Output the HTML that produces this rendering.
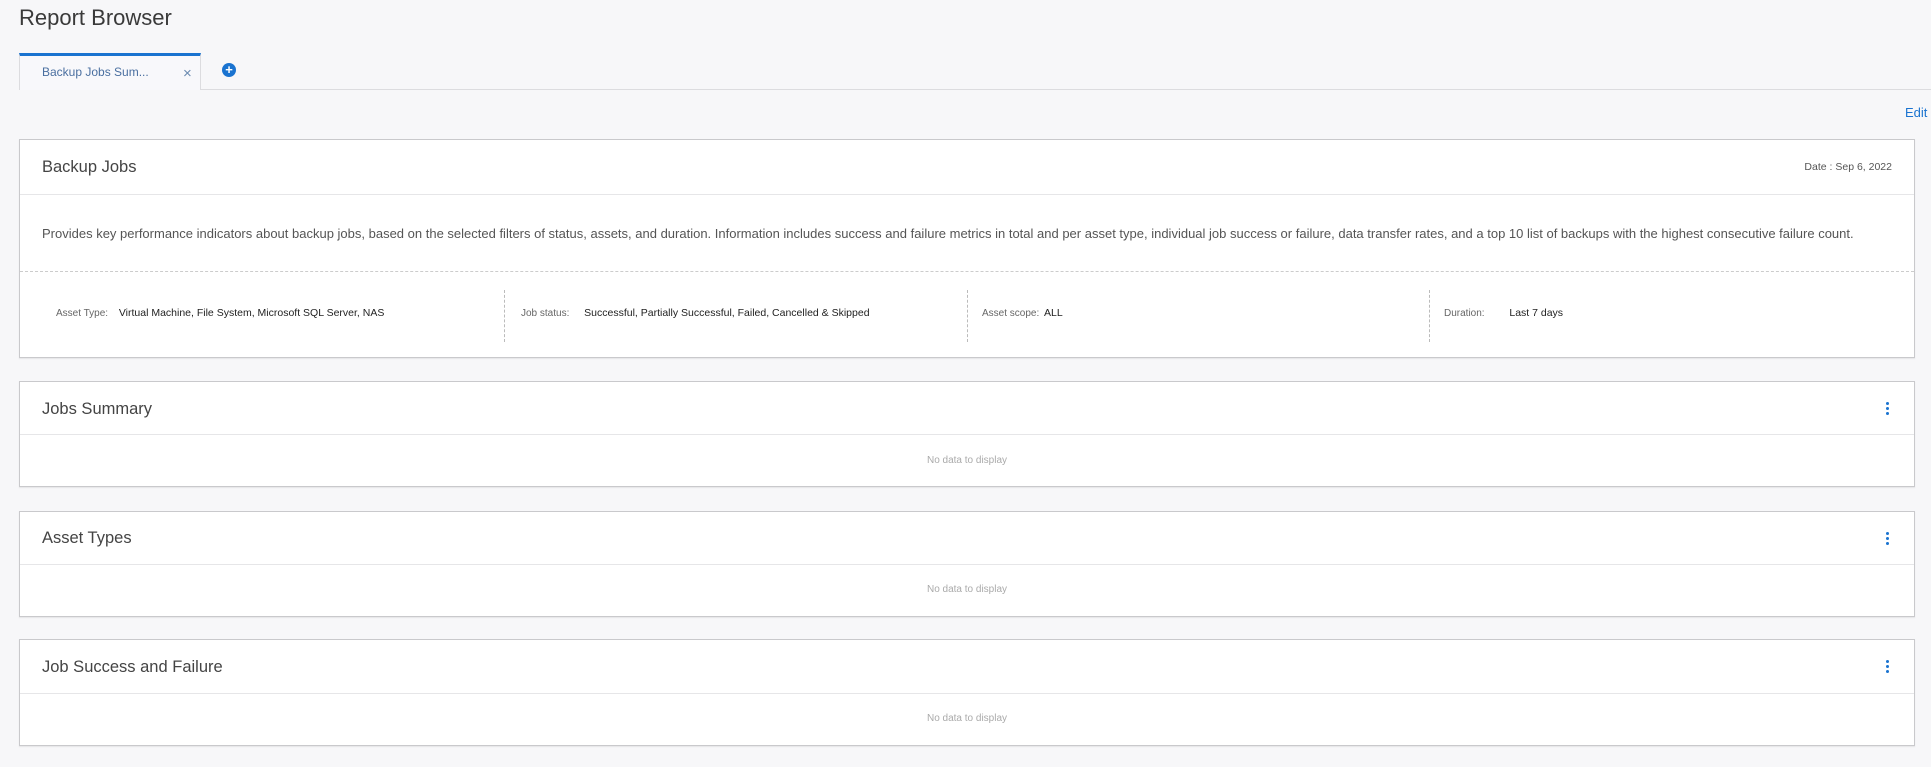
<!DOCTYPE html>
<html><head><meta charset="utf-8"><style>
*{margin:0;padding:0;box-sizing:border-box}
body{width:1931px;height:767px;background:#f7f7f9;font-family:"Liberation Sans",sans-serif;color:#333;position:relative;overflow:hidden}
.abs{position:absolute}
.title{left:19px;top:5px;font-size:22px;color:#3a3a3a}
.tabline{left:19px;right:0;top:89px;height:1px;background:#dcdcdf}
.tab{left:19px;top:53px;width:182px;height:37px;background:#f8f8fb;border-top:3px solid #1a73d0;border-right:1px solid #dcdcdf;border-left:1px solid #dcdcdf}
.tab span{position:absolute;left:22px;top:9px;font-size:12px;color:#4a6fa0}
.tab i{position:absolute;left:163px;top:9px;font-style:normal;font-size:15px;color:#6a8ab0}
.plus{left:222px;top:63px;width:14px;height:14px;border-radius:50%;background:#1a73d0;color:#fff;font-size:13px;line-height:14px;text-align:center;font-weight:bold}
.edit{left:1905px;top:105px;font-size:13px;color:#1a73d0}
.card{left:19px;width:1896px;background:#fff;border:1px solid #c9c9cc;box-shadow:0 1px 1px rgba(0,0,0,.08)}
.card h3{position:absolute;left:22px;font-weight:normal;font-size:16.5px;color:#444}
.card .hd{position:absolute;left:0;right:0;height:1px;background:#e6e6e8}
.nd{position:absolute;left:0;right:0;text-align:center;font-size:10px;color:#aaa}
.keb{position:absolute;right:25px;width:3px}
.keb b{display:block;width:3px;height:3px;border-radius:50%;background:#1a73d0;margin-bottom:2px}
.f{position:absolute;top:307px;font-size:10px;color:#666;white-space:nowrap}
.f b{font-weight:normal;color:#222;margin-left:8px;font-size:10.5px}
.vd{position:absolute;top:290px;height:52px;border-left:1px dashed #bbb}
</style></head><body>
<div class="abs title">Report Browser</div>
<div class="abs tabline"></div>
<div class="abs tab"><span>Backup Jobs Sum...</span><i>×</i></div>
<div class="abs plus">+</div>
<div class="abs edit">Edit</div>

<div class="abs card" style="top:139px;height:219px">
<h3 style="top:18px">Backup Jobs</h3>
<div style="position:absolute;right:22px;top:21px;font-size:10.5px;color:#555">Date : Sep 6, 2022</div>
<div class="hd" style="top:54px"></div>
<div style="position:absolute;left:22px;top:86px;font-size:13px;color:#555;white-space:nowrap">Provides key performance indicators about backup jobs, based on the selected filters of status, assets, and duration. Information includes success and failure metrics in total and per asset type, individual job success or failure, data transfer rates, and a top 10 list of backups with the highest consecutive failure count.</div>
<div style="position:absolute;left:0;right:0;top:131px;border-top:1px dashed #ccc"></div>
</div>
<div class="f" style="left:56px">Asset Type: <b>Virtual Machine, File System, Microsoft SQL Server, NAS</b></div>
<div class="vd" style="left:504px"></div>
<div class="f" style="left:521px">Job status: <b style="margin-left:12px">Successful, Partially Successful, Failed, Cancelled &amp; Skipped</b></div>
<div class="vd" style="left:967px"></div>
<div class="f" style="left:982px">Asset scope: <b style="margin-left:2px">ALL</b></div>
<div class="vd" style="left:1429px"></div>
<div class="f" style="left:1444px">Duration: <b style="margin-left:22px">Last 7 days</b></div>

<div class="abs card" style="top:381px;height:106px">
<h3 style="top:18px">Jobs Summary</h3><div class="keb" style="top:20px"><b></b><b></b><b></b></div>
<div class="hd" style="top:52px"></div><div class="nd" style="top:73px">No data to display</div></div>

<div class="abs card" style="top:511px;height:106px">
<h3 style="top:17px">Asset Types</h3><div class="keb" style="top:20px"><b></b><b></b><b></b></div>
<div class="hd" style="top:52px"></div><div class="nd" style="top:72px">No data to display</div></div>

<div class="abs card" style="top:639px;height:107px">
<h3 style="top:18px">Job Success and Failure</h3><div class="keb" style="top:20px"><b></b><b></b><b></b></div>
<div class="hd" style="top:53px"></div><div class="nd" style="top:73px">No data to display</div></div>
</body></html>
